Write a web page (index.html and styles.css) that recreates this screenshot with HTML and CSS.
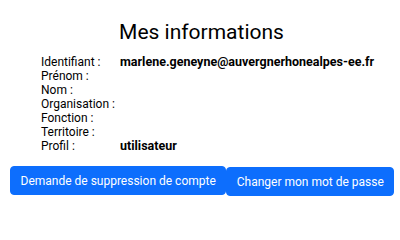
FILE: index.html
```html
<!DOCTYPE html>
<html lang="fr">
<head>
<meta charset="utf-8">
<link rel="stylesheet" href="styles.css">
</head>
<body>
<main class="page">
  <h1 class="title">Mes informations</h1>
  <div class="info">
    <div class="row"><span class="label">Identifiant :</span><span class="value">marlene.geneyne@auvergnerhonealpes-ee.fr</span></div>
    <div class="row"><span class="label">Prénom :</span><span class="value"></span></div>
    <div class="row"><span class="label">Nom :</span><span class="value"></span></div>
    <div class="row"><span class="label">Organisation :</span><span class="value"></span></div>
    <div class="row"><span class="label">Fonction :</span><span class="value"></span></div>
    <div class="row"><span class="label">Territoire :</span><span class="value"></span></div>
    <div class="row"><span class="label">Profil :</span><span class="value">utilisateur</span></div>
  </div>
  <div class="actions">
    <button class="btn">Demande de suppression de compte</button>
    <button class="btn btn-second">Changer mon mot de passe</button>
  </div>
</main>
</body>
</html>
```
FILE: styles.css
```css
html, body {
  margin: 0;
  padding: 0;
  background: #fff;
}
body {
  font-family: Roboto, "Liberation Sans", sans-serif;
  color: #000;
}
.page {
  padding-top: 19px;
  display: flex;
  flex-direction: column;
}
.title {
  margin: 0;
  font-size: 21px;
  font-weight: 400;
  text-align: center;
  padding-left: 3px;
  line-height: 26px;
}
.info {
  margin-top: 10px;
  padding-left: 41px;
  font-size: 12px;
  line-height: 14px;
}
.row {
  display: flex;
}
.label {
  width: 79px;
  flex: none;
}
.value {
  font-weight: 700;
  font-size: 12.5px;
}
.actions {
  display: flex;
  align-items: flex-start;
  margin-top: 13px;
  padding-left: 10px;
}
.btn {
  flex: none;
  white-space: nowrap;
  font-family: Roboto, "Liberation Sans", sans-serif;
  font-size: 12px;
  color: #fff;
  background: #0d6efd;
  border: 1px solid #0d6efd;
  border-radius: 4px;
  height: 29px;
  padding: 0 9.5px;
  cursor: pointer;
}
.btn-second {
  margin-top: 1px;
}
```
